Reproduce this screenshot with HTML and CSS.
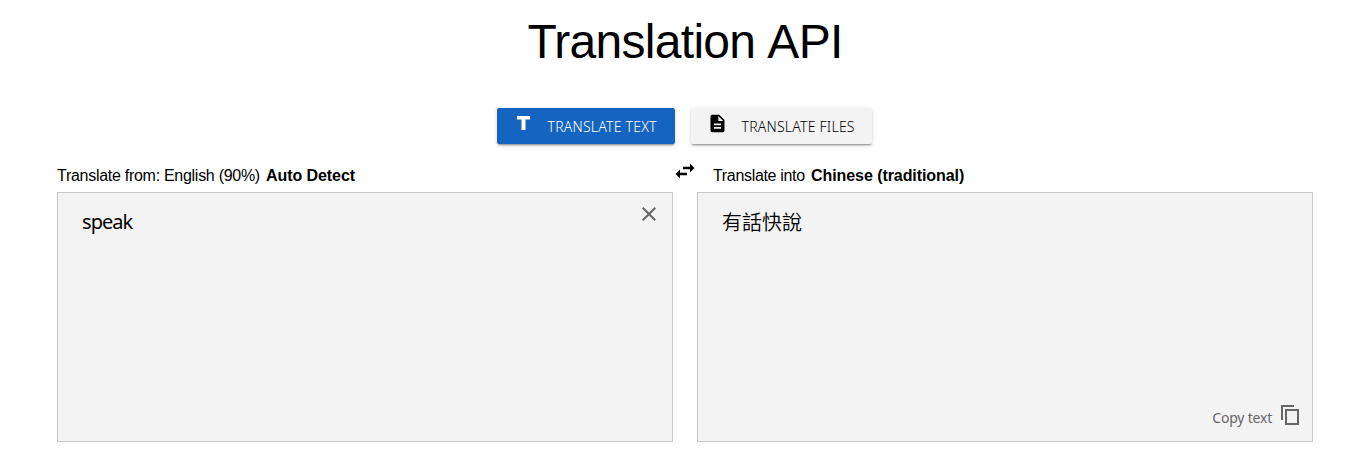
FILE: index.html
```html
<!DOCTYPE html>
<html lang="en">
<head>
<meta charset="utf-8">
<title>Translation API</title>
<link rel="stylesheet" href="styles.css">
</head>
<body>
<main class="page">
  <h1 class="title">Translation API</h1>
  <div class="modes">
    <button class="mode mode-active">
      <svg class="mode-icon" viewBox="0 0 21 21"><path d="M4 3h13v3.500h-4.500V17h-4V6.500H4z"/></svg>
      <span class="mode-text">TRANSLATE TEXT</span>
    </button>
    <button class="mode mode-files">
      <svg class="mode-icon" viewBox="0 0 24 24"><path d="M14 2H6c-1.1 0-2 .9-2 2v16c0 1.1.9 2 2 2h12c1.1 0 2-.9 2-2V8zM16 18H8v-2h8zm0-4H8v-2h8zm-3-5V3.500L18.500 9z"/></svg>
      <span class="mode-text">TRANSLATE FILES</span>
    </button>
  </div>
  <div class="languages">
    <div class="lang lang-from"><span class="from-text">Translate from: English (90%)</span><b class="from-name">Auto Detect</b></div>
    <svg class="swap" viewBox="0 0 24 24"><path d="M7 10.500L2.500 15 7 19.300V16.300h7v-2.500H7zM21.500 9L17 4.500v3.200h-7v2.500h7v3.300z"/></svg>
    <div class="lang"><span class="into-text">Translate into</span><b class="into-name">Chinese (traditional)</b></div>
  </div>
  <div class="panels">
    <section class="panel">
      <span class="source">speak</span>
      <svg class="clear" viewBox="0 0 24 24"><path d="M19 6.410L17.590 5 12 10.590 6.410 5 5 6.410 10.590 12 5 17.590 6.410 19 12 13.410 17.590 19 19 17.590 13.410 12z"/></svg>
    </section>
    <section class="panel">
      <span class="result" lang="zh-Hant">有話快說</span>
      <div class="copy"><span class="copy-text">Copy text</span>
        <svg class="copy-icon" viewBox="0 0 18 20"><path fill-rule="evenodd" d="M0 0h13v2H2v13H0zM4 4h14v16H4zM6 6v12h10V6z"/></svg>
      </div>
    </section>
  </div>
</main>
</body>
</html>
```
FILE: styles.css
```css
* { box-sizing: border-box; }
body { margin: 0; background: #fff; color: #000; font-family: "Liberation Sans", Arial, sans-serif; overflow: hidden; }
svg { display: block; fill: currentColor; flex: none; }
.page { width: 1256px; margin-left: 57px; padding-top: 14px; }
.title { margin: 0; height: 56px; font-size: 48px; line-height: 56px; font-weight: 400; letter-spacing: -.7px; word-spacing: 2px; text-align: center; white-space: nowrap; }
.modes { display: flex; justify-content: center; gap: 16px; margin: 38px 2px 0 0; }
.mode { display: flex; align-items: center; width: 178px; height: 36px; padding: 0 0 0 16px; border: 0; border-radius: 2px; background: #f3f3f3; color: #000; box-shadow: 0 3px 1px -2px rgba(0,0,0,.2), 0 2px 2px rgba(0,0,0,.14), 0 1px 5px rgba(0,0,0,.12); font: 14px "Noto Sans", sans-serif; white-space: nowrap; }
.mode-active { background: #1565c0; color: #fff; }
.mode-files { width: 181px; }
.mode-icon { width: 21px; height: 21px; margin: -5px 14px 0 0; }
.mode-text { font-weight: 300; letter-spacing: .23px; }
.languages { display: flex; height: 48px; font-size: 16px; line-height: 20px; white-space: nowrap; }
.lang { display: flex; padding-top: 22px; }
.lang-from { width: 616px; }
.from-text { width: 209px; letter-spacing: -.28px; }
.into-text { width: 98px; letter-spacing: -.33px; }
.from-name, .into-name { letter-spacing: -.07px; }
.swap { width: 24px; height: 24px; margin: 15px 16px 0 0; }
.panels { display: flex; gap: 24px; }
.panel { display: flex; justify-content: space-between; width: 616px; height: 250px; padding: 16px 11px 11px 24px; background: #f3f3f3; border: 1px solid #c8c8c8; }
.source { margin-top: -1px; font: 20px/28px "Noto Sans", sans-serif; letter-spacing: -.95px; }
.clear { width: 24px; height: 24px; margin-top: -7px; color: #666; }
.result { margin-top: -1px; font: 350 20px/28px "Noto Sans CJK TC", sans-serif; }
.copy { display: flex; align-items: center; align-self: flex-end; gap: 9px; margin-right: 2px; color: #666; }
.copy-text { font: 14px/24px "Noto Sans", sans-serif; letter-spacing: -.2px; }
.copy-icon { width: 18px; height: 20px; margin-top: -6px; }
```
